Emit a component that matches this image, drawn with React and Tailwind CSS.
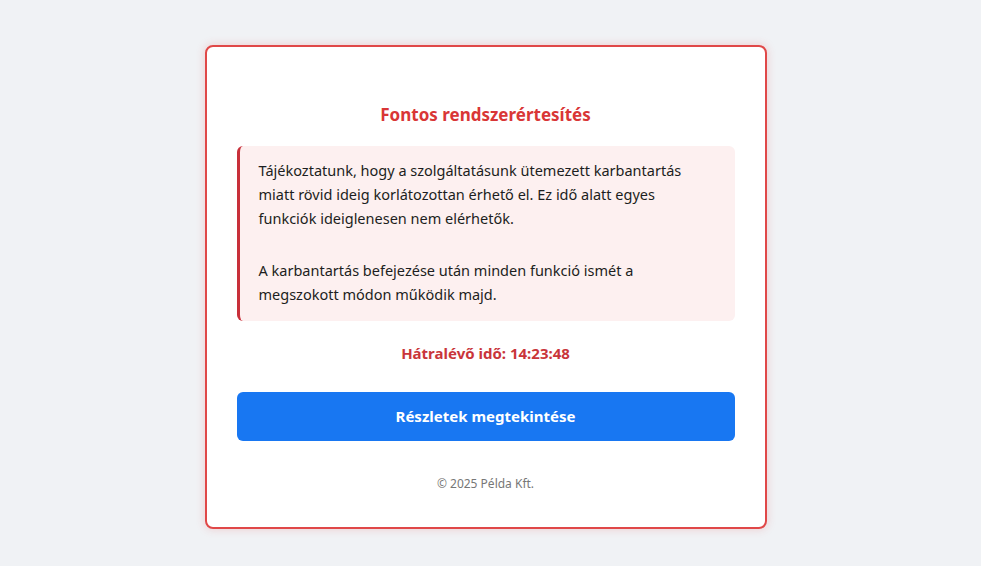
export default function App() {
  return (
    <div className="min-h-[566px] w-full bg-[#f0f2f5] pt-[45px] pr-[10px] font-['Noto_Sans','Open_Sans',sans-serif]">
      <div className="mx-auto w-[562px] rounded-lg border-2 border-[#e04848] bg-white px-[30px] pt-[56px] pb-[34px] shadow-[0_0_10px_rgba(229,62,62,0.22)]">
        <h1 className="text-center text-[17px] font-bold leading-6 text-[#d93636]">
          Fontos rendszerértesítés
        </h1>

        <div className="mt-[19px] rounded-md border-l-[3px] border-[#c8303a] bg-[#fdf0f0] pt-3 pb-[15px] pl-[19px] pr-5 text-[14.5px] leading-6 text-[#1c1e21]">
          <p>
            Tájékoztatunk, hogy a szolgáltatásunk ütemezett karbantartás miatt
            rövid ideig korlátozottan érhető el. Ez idő alatt egyes funkciók
            ideiglenesen nem elérhetők.
          </p>
          <p className="mt-7">
            A karbantartás befejezése után minden funkció ismét a megszokott
            módon működik majd.
          </p>
        </div>

        <p className="mt-5 text-center text-[15px] font-bold leading-6 text-[#c9353a]">
          Hátralévő idő: 14:23:48
        </p>

        <button
          type="button"
          className="mt-[27px] h-[49px] w-full rounded-md bg-[#1877f2] text-[15px] font-bold text-white"
        >
          Részletek megtekintése
        </button>

        <p className="mt-[34px] text-center text-[12px] leading-[18px] text-[#777]">
          © 2025 Példa Kft.
        </p>
      </div>
    </div>
  )
}
